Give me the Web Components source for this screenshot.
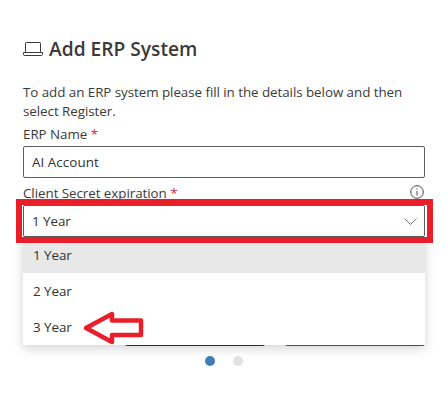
<!DOCTYPE html>
<html><head><meta charset="utf-8"><style>
html,body{margin:0;background:#fff}
body{width:448px;height:414px;overflow:hidden;font-family:"Open Sans","Noto Sans",sans-serif;color:#323130}
</style></head><body>
<erp-panel>
  <erp-heading>Add ERP System</erp-heading>
  <p slot="intro">To add an ERP system please fill in the details below and then select Register.</p>
  <erp-field slot="name" label="ERP Name" value="AI Account"></erp-field>
  <erp-select slot="expiry" label="Client Secret expiration" value="1 Year">
    <erp-option selected>1 Year</erp-option>
    <erp-option>2 Year</erp-option>
    <erp-option>3 Year</erp-option>
  </erp-select>
</erp-panel>
<script>
const FONT='"Open Sans","Noto Sans",sans-serif';
const LS='-.06px';
class ErpPanel extends HTMLElement{constructor(){super();this.attachShadow({mode:'open'}).innerHTML=`<style>
:host{display:block;box-sizing:border-box;width:448px;height:414px;padding:38px 23px 0}
.intro{display:block;margin-top:23px}
::slotted(p){margin:0;font:13.4px/19px ${FONT};letter-spacing:${LS};color:#3b3a39}
.name{display:block;margin-top:5px}
.expiry{display:block;margin-top:8px}
.actions{display:flex;justify-content:flex-end;gap:20px;margin-top:77px}
.btn{box-sizing:border-box;width:140px;height:32px}
.primary{background:#2b2f77;border-radius:2px}
.secondary{background:#fff;border:1px solid #5c5a58;border-radius:2px}
.dots{display:flex;justify-content:center;gap:18px;margin-top:10px}
.dot{width:10px;height:10px;border-radius:50%;background:#e3e3e3}
.dot.on{background:#3f7fb5}
</style>
<slot></slot>
<div class="intro"><slot name="intro"></slot></div>
<div class="name"><slot name="name"></slot></div>
<div class="expiry"><slot name="expiry"></slot></div>
<div class="actions"><div class="btn primary"></div><div class="btn secondary"></div></div>
<div class="dots"><span class="dot on"></span><span class="dot"></span></div>`}}
class ErpHeading extends HTMLElement{constructor(){super();this.attachShadow({mode:'open'}).innerHTML=`<style>
:host{display:flex;align-items:center;gap:6px;height:22px;font:600 19.2px/22px ${FONT};color:#3b3a39}
svg{width:20px;height:16px;flex:none}
</style>
<svg viewBox="0 0 20 16" fill="none" stroke="#3b3a39" stroke-width="1"><rect x="2.500" y="1.500" width="15" height="10" rx=".8"/><path d="M.5 11.500h19v1.800a1.200 1.200 0 0 1-1.200 1.200H1.700a1.200 1.200 0 0 1-1.200-1.200z"/></svg>
<span><slot></slot></span>`}}
const labelCss=`.label{display:block;font:13.4px/17px ${FONT};letter-spacing:${LS};color:#3b3a39}
.req{color:#c4314b}`;
class ErpField extends HTMLElement{constructor(){super();this.attachShadow({mode:'open'}).innerHTML=`<style>
:host{display:block}
${labelCss}
.label{height:19px}
.box{box-sizing:border-box;height:32px;margin-top:1px;border:1px solid #605e5c;border-radius:2px;padding:1px 8px 0;font:13.4px/29px ${FONT};letter-spacing:.05px;color:#323130}
</style>
<span class="label">${this.getAttribute('label')} <span class="req">*</span></span>
<div class="box">${this.getAttribute('value')}</div>`}}
class ErpSelect extends HTMLElement{constructor(){super();this.attachShadow({mode:'open'}).innerHTML=`<style>
:host{display:block;position:relative}
${labelCss}
.label{line-height:15px}
.head{display:flex;justify-content:space-between;align-items:flex-start;height:19px}
.info{width:14px;height:14px;flex:none;margin:-1px 1px 0 0}
.box{box-sizing:border-box;display:flex;justify-content:space-between;align-items:center;height:32px;border:1px solid #605e5c;border-radius:2px;padding:0 7px 0 8px;background:#fff;font:13.4px/28px ${FONT};letter-spacing:${LS};color:#323130}
.box svg{width:13px;height:7px}
.frame{position:absolute;left:-7px;right:-8px;top:13px;height:44px;box-sizing:border-box;border:6px solid #e81e2b;pointer-events:none;z-index:2}
.menu{position:absolute;left:0;right:0;top:51px;background:#fff;box-shadow:0 3px 10px rgba(0,0,0,.18);z-index:1}
.arrow{position:absolute;left:60px;top:125px;width:61px;height:34px;z-index:3}
</style>
<div class="head"><span class="label">${this.getAttribute('label')} <span class="req">*</span></span>
<svg class="info" viewBox="0 0 14 14" fill="none" stroke="#4a4a4a"><circle cx="7" cy="7" r="6.300"/><path d="M7 6v4.500M7 3.500v1.200"/></svg></div>
<div class="box"><span>${this.getAttribute('value')}</span><svg viewBox="0 0 13 7" fill="none" stroke="#7a7876"><path d="M.5.500 6.500 6.500l6-6"/></svg></div>
<div class="frame"></div>
<div class="menu"><slot></slot></div>
<svg class="arrow" viewBox="0 0 61 34" fill="#fff" stroke="#e81e2b" stroke-width="4.500" stroke-linejoin="round"><path d="M3 17 29 3v6.500h29V24H29v7z"/></svg>`}}
class ErpOption extends HTMLElement{constructor(){super();this.attachShadow({mode:'open'}).innerHTML=`<style>
:host{display:block;box-sizing:border-box;height:36px;padding:0 10px;font:13.4px/36px ${FONT};letter-spacing:${LS};color:#323130}
:host([selected]){background:#e8e8e8}
</style><slot></slot>`}}
customElements.define('erp-panel',ErpPanel);
customElements.define('erp-heading',ErpHeading);
customElements.define('erp-field',ErpField);
customElements.define('erp-select',ErpSelect);
customElements.define('erp-option',ErpOption);
</script>
</body></html>
